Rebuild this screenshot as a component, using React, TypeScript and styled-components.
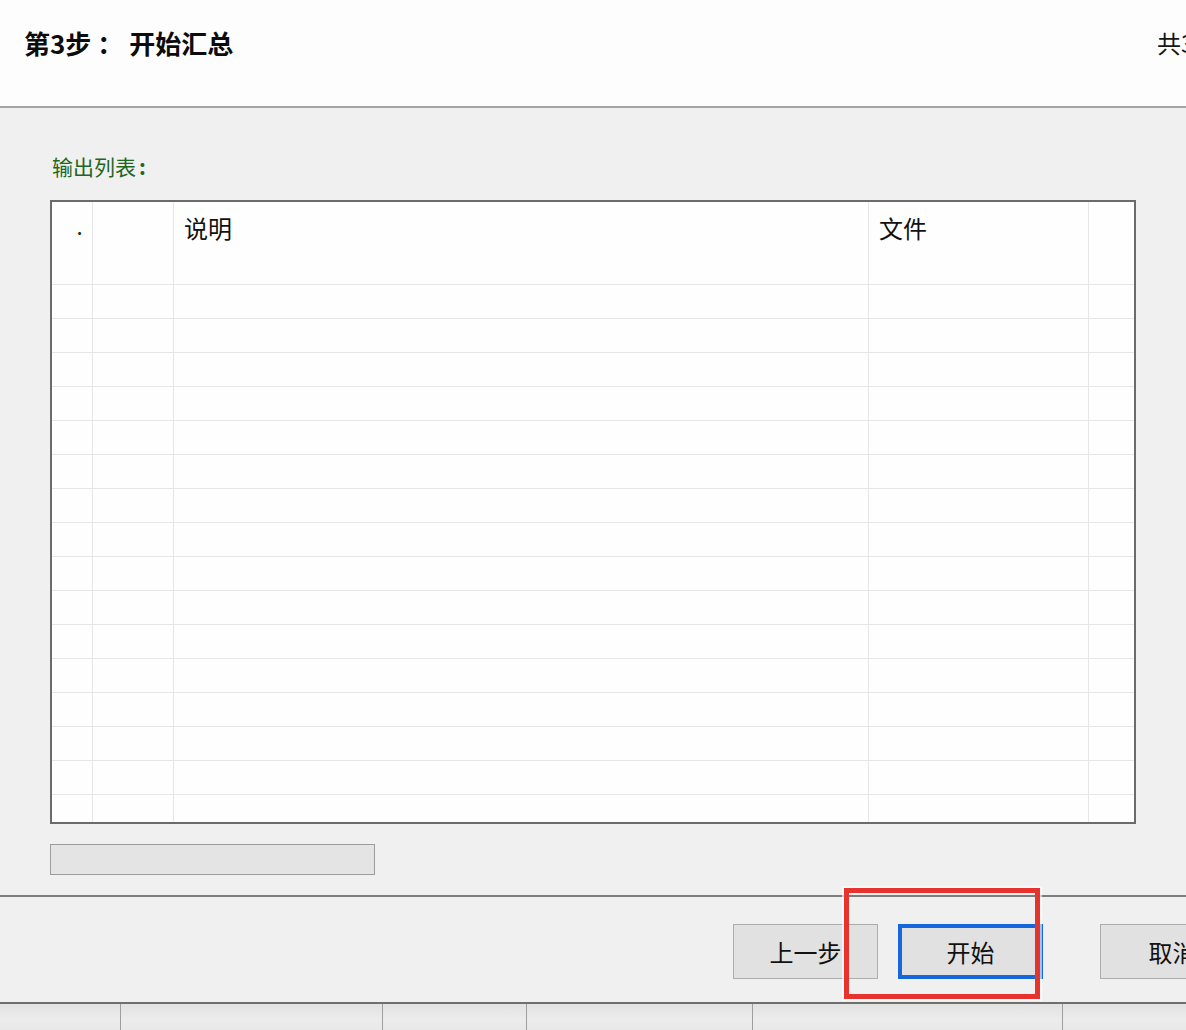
import React, { FC } from "react";
import styled, { createGlobalStyle } from "styled-components";

const GlobalStyle = createGlobalStyle`
  html, body {
    margin: 0;
    padding: 0;
    overflow: hidden;
    background: #f0f0f0;
  }
  body {
    font-family: "Noto Sans CJK SC", "Noto Sans", "Liberation Sans", sans-serif;
    color: #111;
  }
`;

const Window = styled.div`
  position: relative;
  width: 1186px;
  height: 1030px;
  overflow: hidden;
  display: flex;
  flex-direction: column;
  background: #f0f0f0;
`;

const Header = styled.header`
  height: 108px;
  flex-shrink: 0;
  display: grid;
  grid-template-columns: 1133px 200px;
  align-items: start;
  padding: 26px 0 0 24px;
  box-sizing: border-box;
  background: #fdfdfd;
  border-bottom: 2px solid #a4a4a4;
`;

const Title = styled.h1`
  margin: 0;
  font-size: 26px;
  font-weight: 700;
  line-height: 34px;
  color: #0c0c0c;
  white-space: nowrap;
`;

const StepCount = styled.span`
  font-size: 24px;
  line-height: 34px;
  color: #151515;
  white-space: nowrap;
`;

const Body = styled.main`
  height: 789px;
  flex-shrink: 0;
  box-sizing: border-box;
  display: flex;
  flex-direction: column;
  align-items: flex-start;
  padding: 43px 50px 0 51px;
  border-bottom: 2px solid #7c7c7c;
`;

const SectionLabel = styled.div`
  font-size: 21px;
  line-height: 30px;
  color: #1f661f;
  margin: 0 0 19px 1px;

  b {
    font-weight: 700;
    margin-left: 3px;
  }
`;

const Grid = styled.div`
  width: 1086px;
  height: 624px;
  margin-left: -1px;
  box-sizing: border-box;
  border: 2px solid #6b6b6b;
  background: #fefefe;
  overflow: hidden;
  display: grid;
  grid-template-columns: 41px 81px 695px 220px 1fr;
  grid-template-rows: 83px;
  grid-auto-rows: 34px;
`;

const Cell = styled.div<{ $last?: boolean }>`
  box-sizing: border-box;
  border-bottom: 1px solid #e6e6e6;
  border-right: ${(p) => (p.$last ? "none" : "1px solid #e6e6e6")};
`;

const HeadCell = styled(Cell)`
  padding: 9px 0 0 10px;
  font-size: 24px;
  line-height: 34px;
  color: #111;
`;

const IndexHead = styled(Cell)`
  padding: 16px 0 0 25px;
  font-size: 16px;
  font-weight: 700;
  line-height: 20px;
  color: #222;
`;

const Progress = styled.div`
  margin: 20px 0 0 -1px;
  width: 325px;
  height: 31px;
  box-sizing: border-box;
  border: 1px solid #9c9c9c;
  background: #e4e4e4;
`;

const Footer = styled.footer`
  height: 107px;
  flex-shrink: 0;
  display: flex;
  align-items: flex-start;
  padding: 27px 0 0 733px;
  box-sizing: border-box;
  border-bottom: 2px solid #6f6f6f;
`;

const Button = styled.button<{ $primary?: boolean; $gap: number }>`
  flex-shrink: 0;
  margin-left: ${(p) => p.$gap}px;
  width: 145px;
  height: 55px;
  box-sizing: border-box;
  border: ${(p) => (p.$primary ? "4px solid #1767dc" : "1px solid #adadad")};
  background: #e1e1e1;
  font-family: inherit;
  font-size: 24px;
  color: #111;
  padding: 0;
`;

const StatusBar = styled.div`
  flex: 1;
  display: grid;
  grid-template-columns: 121px 262px 144px 226px 310px 1fr;
  background: linear-gradient(#e2e2e2, #ececec 60%, #e8e8e8);
`;

const StatusCell = styled.div`
  border-right: 1px solid #9e9e9e;
  &:last-child {
    border-right: none;
  }
`;

const Highlight = styled.div`
  position: absolute;
  left: 844px;
  top: 888px;
  width: 196px;
  height: 111px;
  box-sizing: border-box;
  border: 5px solid #e6332d;
  box-shadow: 0 0 0 2px rgba(255, 255, 255, 0.6);
  pointer-events: none;
`;

const ROWS = 16;
const COLS = 5;

const App: FC = () => {
  return (
    <Window>
      <GlobalStyle />
      <Header>
        <Title>第3步 ： 开始汇总</Title>
        <StepCount>共3步</StepCount>
      </Header>
      <Body>
        <SectionLabel>
          输出列表<b>:</b>
        </SectionLabel>
        <Grid>
          <IndexHead>.</IndexHead>
          <HeadCell />
          <HeadCell>说明</HeadCell>
          <HeadCell>文件</HeadCell>
          <HeadCell $last />
          {Array.from({ length: ROWS * COLS }).map((_, i) => (
            <Cell key={i} $last={i % COLS === COLS - 1} />
          ))}
        </Grid>
        <Progress />
      </Body>
      <Footer>
        <Button type="button" $gap={0}>上一步</Button>
        <Button type="button" $gap={20} $primary>开始</Button>
        <Button type="button" $gap={57}>取消</Button>
      </Footer>
      <StatusBar>
        {Array.from({ length: 6 }).map((_, i) => (
          <StatusCell key={i} />
        ))}
      </StatusBar>
      <Highlight />
    </Window>
  );
};

export default App;
